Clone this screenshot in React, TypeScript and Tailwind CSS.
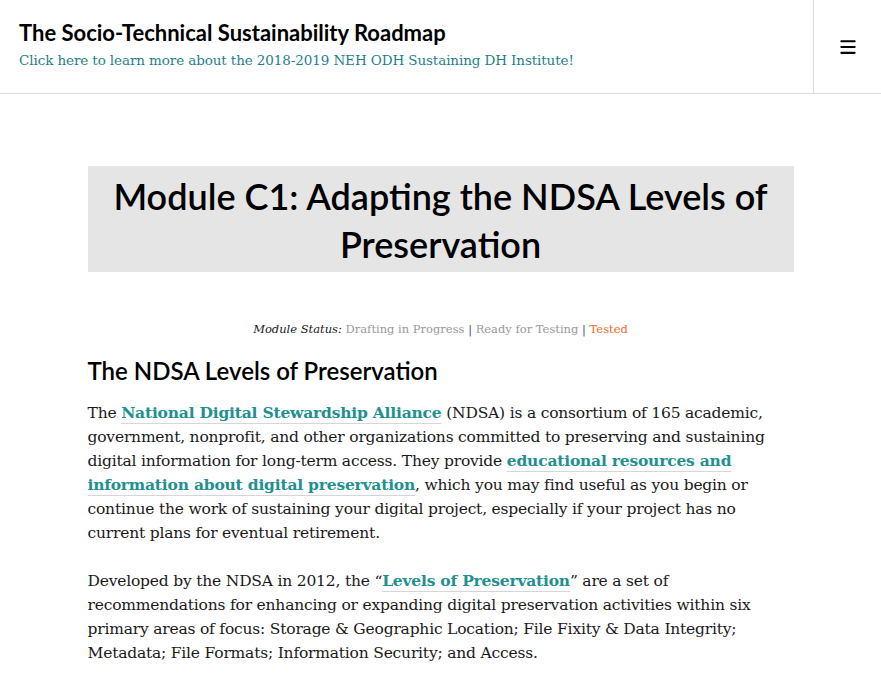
import { Menu } from "lucide-react";

const serif = "font-['DejaVu_Serif','Liberation_Serif',serif]";
const lato = "font-['Lato','Liberation_Sans',sans-serif]";

function Link({ children }: { children: React.ReactNode }) {
  return (
    <a
      href="#"
      className="font-bold text-[#21908f] underline decoration-[#d6d6d6] decoration-1 underline-offset-[5px]"
    >
      {children}
    </a>
  );
}

export default function App() {
  return (
    <div className="min-h-[681px] bg-white text-[#1a1a1a]">
      <header className="flex h-[94px] border-b border-[#ddd]">
        <div className="flex flex-1 flex-col pl-[19px] pt-[19px]">
          <h1 className={`${lato} text-[22px] font-bold leading-7 text-black`}>
            The Socio-Technical Sustainability Roadmap
          </h1>
          <p className={`${serif} mt-[3px] text-[13.5px] leading-5 tracking-[-0.1px] text-[#1f7f8c]`}>
            Click here to learn more about the 2018-2019 NEH ODH Sustaining DH Institute!
          </p>
        </div>
        <button className="flex w-[68px] items-center justify-center border-l border-[#ddd]">
          <Menu size={20} strokeWidth={2.5} className="text-black" />
        </button>
      </header>

      <main className="mx-auto w-[706px] pt-[72px]">
        <div className="bg-[#e5e5e5] px-4 pb-[4px] pt-[6px]">
          <h1 className={`${lato} text-center text-[36px] font-semibold leading-[48px] text-black`}>
            Module C1: Adapting the NDSA Levels of Preservation
          </h1>
        </div>

        <p className={`${serif} mt-[47px] text-center text-[11.5px] leading-5`}>
          <em>Module Status:</em> <span className="text-[#999]">Drafting in Progress</span>{" "}
          <span className="text-[#3d4a8a]">|</span> <span className="text-[#999]">Ready for Testing</span>{" "}
          <span className="text-[#3d4a8a]">|</span> <span className="text-[#f26b2a]">Tested</span>
        </p>

        <h2 className={`${lato} mt-[16px] text-[24px] font-semibold leading-8 text-black`}>
          The NDSA Levels of Preservation
        </h2>

        <p className={`${serif} mt-[14px] text-[15.5px] leading-6 tracking-[-0.2px]`}>
          The <Link>National Digital Stewardship Alliance</Link> (NDSA) is a consortium of 165 academic,
          government, nonprofit, and other organizations committed to preserving and sustaining digital
          information for long-term access. They provide{" "}
          <Link>educational resources and information about digital preservation</Link>, which you may find
          useful as you begin or continue the work of sustaining your digital project, especially if your
          project has no current plans for eventual retirement.
        </p>

        <p className={`${serif} mt-6 text-[15.5px] leading-6 tracking-[-0.2px]`}>
          Developed by the NDSA in 2012, the &ldquo;<Link>Levels of Preservation</Link>&rdquo; are a set of
          recommendations for enhancing or expanding digital preservation activities within six primary
          areas of focus: Storage &amp; Geographic Location; File Fixity &amp; Data Integrity; Metadata; File
          Formats; Information Security; and Access.
        </p>
      </main>
    </div>
  );
}
